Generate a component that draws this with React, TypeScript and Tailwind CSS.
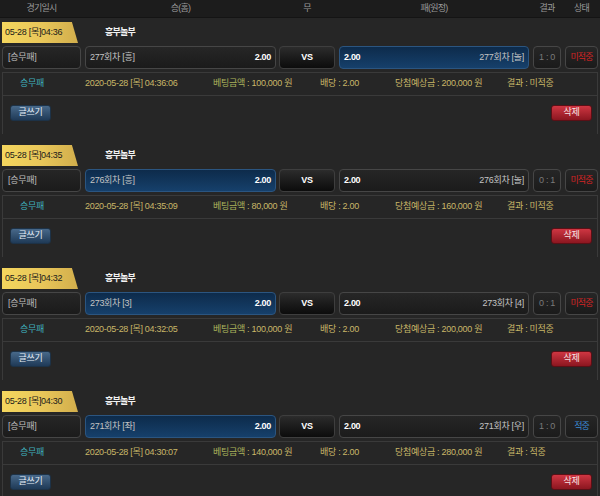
import React from "react";

type Bet = {
  tab: string;
  home: string;
  away: string;
  sel: "home" | "away";
  score: string;
  status: string;
  win: boolean;
  date: string;
  amount: string;
  prize: string;
};

const bets: Bet[] = [
  { tab: "05-28 [목]04:36", home: "277회차 [흥]", away: "277회차 [놀]", sel: "away", score: "1 : 0", status: "미적중", win: false, date: "2020-05-28 [목] 04:36:06", amount: "100,000", prize: "200,000" },
  { tab: "05-28 [목]04:35", home: "276회차 [흥]", away: "276회차 [놀]", sel: "home", score: "0 : 1", status: "미적중", win: false, date: "2020-05-28 [목] 04:35:09", amount: "80,000", prize: "160,000" },
  { tab: "05-28 [목]04:32", home: "273회차 [3]", away: "273회차 [4]", sel: "home", score: "0 : 1", status: "미적중", win: false, date: "2020-05-28 [목] 04:32:05", amount: "100,000", prize: "200,000" },
  { tab: "05-28 [목]04:30", home: "271회차 [좌]", away: "271회차 [우]", sel: "home", score: "1 : 0", status: "적중", win: true, date: "2020-05-28 [목] 04:30:07", amount: "140,000", prize: "280,000" },
];

const normalBox = "border border-[#464646] bg-gradient-to-b from-[#262626] to-[#1b1b1b]";
const blueBox = "border border-[#2b5580] bg-gradient-to-b from-[#0d2b4b] to-[#16406b]";

function Block({ b, first }: { b: Bet; first: boolean }) {
  return (
    <div className={first ? "mt-[4px]" : "mt-[11px]"}>
      <div className="flex items-center h-[21px]">
        <div className="ml-[2px] w-[76px] h-[21px] flex items-center pl-[3px] text-[9px] text-[#1a1a1a] bg-gradient-to-r from-[#f4d65e] via-[#e9c75a] to-[#d2ae4c] [clip-path:polygon(0_0,92%_0,100%_100%,0_100%)]">
          {b.tab}
        </div>
        <div className="ml-[27px] text-[9px] font-bold text-[#f2f2f2] tracking-[-0.8px]">흥부놀부</div>
      </div>
      <div className="flex mt-[3px] h-[23px] text-[9px]">
        <div className={`ml-[2px] w-[79px] rounded-[4px] flex items-center pl-[5px] text-[#bdbdbd] ${normalBox}`}>[승무패]</div>
        <div className={`ml-[4px] w-[191px] rounded-[4px] flex items-center justify-between px-[4px] ${b.sel === "home" ? blueBox : normalBox}`}>
          <span className="text-[#c4c4c4]">{b.home}</span>
          <span className="font-bold text-white">2.00</span>
        </div>
        <div className="ml-[3px] w-[56px] rounded-[4px] flex items-center justify-center font-bold text-white border border-[#3e3e3e] bg-gradient-to-b from-[#2c2c2c] to-[#0c0c0c]">VS</div>
        <div className={`ml-[4px] w-[190px] rounded-[4px] flex items-center justify-between px-[4px] ${b.sel === "away" ? blueBox : normalBox}`}>
          <span className="font-bold text-white">2.00</span>
          <span className="text-[#c4c4c4]">{b.away}</span>
        </div>
        <div className={`ml-[4px] w-[28px] rounded-[4px] flex items-center justify-center text-[#7a7a7a] ${normalBox}`}>{b.score}</div>
        <div className={`ml-[4px] w-[33px] rounded-[4px] flex items-center justify-center tracking-[-1px] ${b.win ? "text-[#3b8bd4]" : "text-[#d42424]"} ${normalBox}`}>{b.status}</div>
      </div>
      <div className="mt-[3px] mx-[2px] border border-b-0 border-[#3a3a3a]">
        <div className="h-[23px] border-b border-[#3a3a3a] grid grid-cols-[65px_128px_107px_75px_112px_1fr] pl-[17px] items-center text-[9px] text-[#c9b768]">
          <span className="text-[#3fb0bd]">승무패</span>
          <span>{b.date}</span>
          <span><span className="text-[#aab35c]">베팅금액</span> : {b.amount} 원</span>
          <span>배당 : 2.00</span>
          <span>당첨예상금 : {b.prize} 원</span>
          <span>결과 : {b.win ? "적중" : "미적중"}</span>
        </div>
        <div className="h-[38px] flex items-start justify-between pt-[9px] px-[7px] pr-[5px]">
          <button className="w-[41px] h-[16px] rounded-[3px] text-[9px] text-[#e6eef6] border border-[#1d3247] bg-gradient-to-b from-[#48698a] to-[#1f3a57] flex items-center justify-center">글쓰기</button>
          <button className="w-[41px] h-[16px] rounded-[3px] text-[9px] text-[#f6e6e6] border border-[#5a1016] bg-gradient-to-b from-[#cf3642] to-[#8c1620] flex items-center justify-center">삭제</button>
        </div>
      </div>
    </div>
  );
}

export default function App() {
  return (
    <div className="w-[600px] h-[496px] overflow-hidden bg-[#262626] tracking-[-0.3px]" style={{ fontFamily: "'Liberation Sans', 'Noto Sans CJK KR', sans-serif" }}>
      <div className="h-[18px] bg-[#1c1c1c] border-b border-[#141414] flex items-center text-[9px] text-[#9a9a9a] tracking-[-0.8px]">
        <div className="ml-[2px] w-[79px] text-center">경기일시</div>
        <div className="ml-[4px] w-[191px] text-center">승(홈)</div>
        <div className="ml-[3px] w-[56px] text-center">무</div>
        <div className="ml-[4px] w-[190px] text-center">패(원정)</div>
        <div className="ml-[4px] w-[28px] text-center">결과</div>
        <div className="ml-[4px] w-[33px] text-center">상태</div>
      </div>
      {bets.map((b, i) => (
        <Block key={i} b={b} first={i === 0} />
      ))}
    </div>
  );
}
